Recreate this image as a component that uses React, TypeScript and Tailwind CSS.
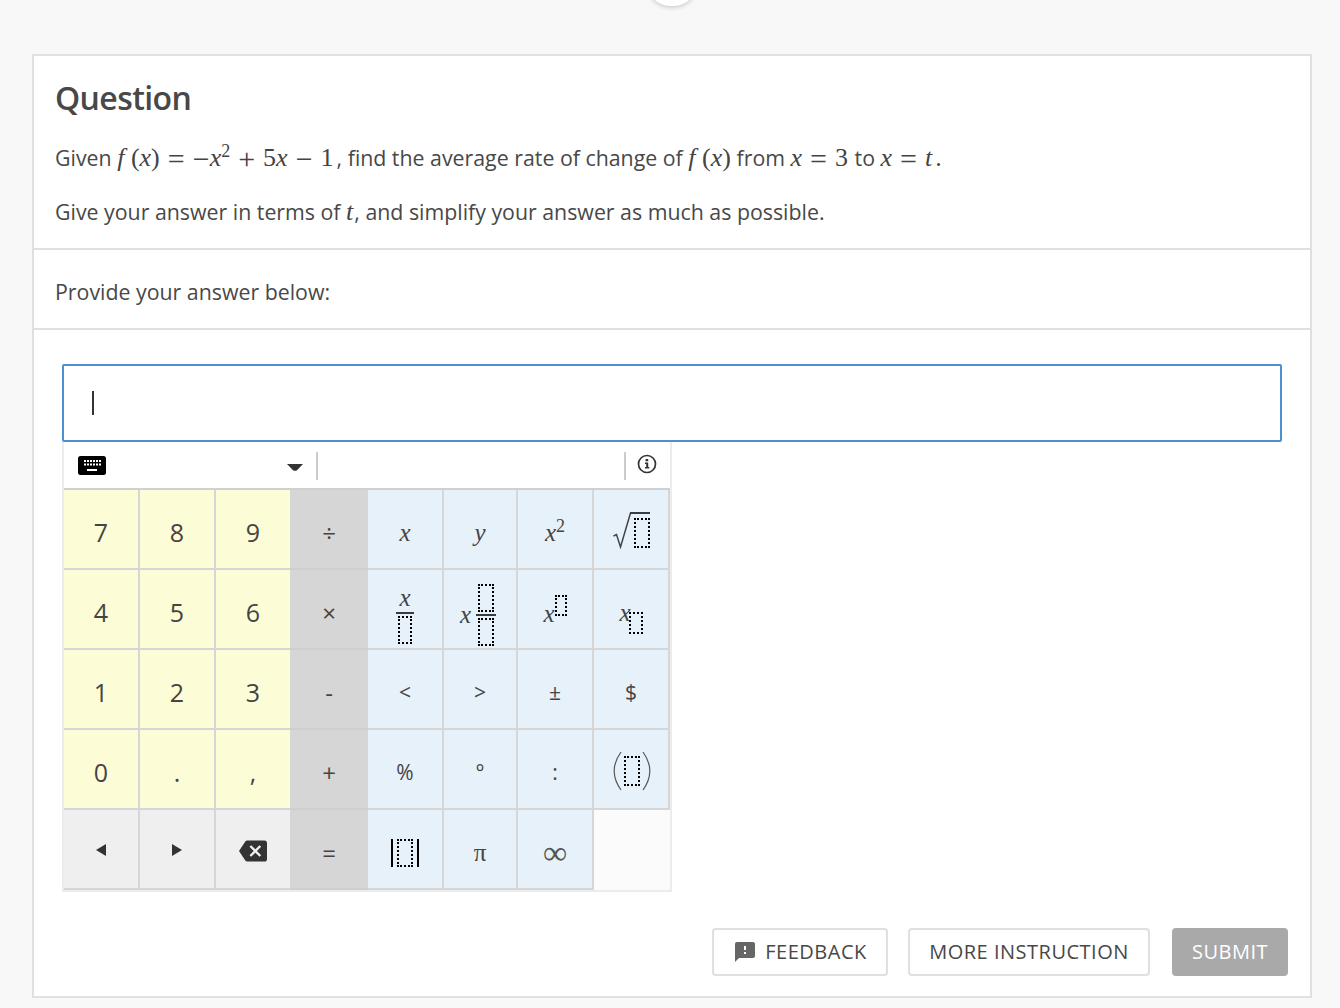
import { MdBackspace, MdFeedback } from 'react-icons/md';

const serif = "font-['Liberation_Serif',serif]";

function Hole({ className }: { className: string }) {
  return <span className={`block border-2 border-dotted border-black ${className}`} />;
}

function V({ children }: { children: React.ReactNode }) {
  return <span className={`${serif} italic`}>{children}</span>;
}

function M({ children }: { children: React.ReactNode }) {
  return <span className={`${serif} text-[26px] text-[#444]`}>{children}</span>;
}

// operators in the formula are wider than the serif font's own
function Op({ children, tight }: { children: React.ReactNode; tight?: boolean }) {
  return <span className={`align-[-3px] text-[30px] leading-none ${tight ? '' : 'mx-[8px]'}`}>{children}</span>;
}

function Key({ kind, noRight, children }: { kind: 'num' | 'op' | 'sym' | 'nav' | 'empty'; noRight?: boolean; children?: React.ReactNode }) {
  const colors = {
    num: 'bg-[#fcfcd7] text-[25px] border-b-2 border-[#d6d6d6]',
    op: 'bg-[#d6d6d6] text-[24px] border-b-2 border-[#cfcfcf]',
    sym: 'bg-[#e6f1fa] text-[21px] border-b-2 border-r-2 border-[#d6d6d6]',
    nav: 'bg-[#efefef] text-[22px] border-b-2 border-[#d6d6d6]',
    empty: 'bg-[#fbfbfb]',
  };
  const right = !noRight && (kind === 'num' || kind === 'nav') ? 'border-r-2' : '';
  return (
    <div className={`flex h-[80px] items-center justify-center pt-[7px] text-[#444] ${colors[kind]} ${right}`}>
      {children}
    </div>
  );
}

function Triangle({ flip }: { flip?: boolean }) {
  return (
    <svg width="12" height="14" viewBox="0 0 12 14" className={`mt-[-5px] ${flip ? 'rotate-180' : ''}`}>
      <path d="M11 1v12L1 7z" fill="#333" />
    </svg>
  );
}

function Paren({ flip }: { flip?: boolean }) {
  return (
    <svg width="9" height="40" viewBox="0 0 9 40" className={flip ? 'rotate-180' : ''}>
      <path d="M8 1C3 8 1.200 13 1.200 20S3 32 8 39" fill="none" stroke="#555" strokeWidth="1.200" />
    </svg>
  );
}

export default function App() {
  return (
    <div className="relative h-[1008px] overflow-hidden bg-[#f8f8f8] px-[32px] pt-[54px] font-['Open_Sans',sans-serif] text-[#484848]">
      <div className="absolute left-[648px] top-[-38px] h-[44px] w-[48px] rounded-full bg-white shadow-[0_1px_5px_rgba(0,0,0,0.22)]" />

      <div className="h-[944px] w-[1280px] border-2 border-[#e0e0e0] bg-white">
        <div className="h-[194px] border-b-2 border-[#e0e0e0] px-[21px] pt-[19px]">
          <h1 className="text-[32px] font-semibold leading-[46px] tracking-[-0.6px]">Question</h1>
          <p className="mt-[21px] whitespace-nowrap text-[21.33px] leading-[32px]">
            Given{' '}
            <M>
              <V>f</V> (<V>x</V>)<Op>=</Op>
              <Op tight>−</Op>
              <V>x</V>
              <sup className="text-[18px]">2</sup>
              <Op>+</Op>5<V>x</V>
              <Op>−</Op>1
            </M>
            <span className="ml-[3px]">,</span> find the average rate of change of{' '}
            <M>
              <V>f</V> (<V>x</V>)
            </M>{' '}
            from{' '}
            <M>
              <V>x</V>
              <Op>=</Op>3
            </M>{' '}
            <span className="ml-[1px]">to</span>{' '}
            <M>
              <V>x</V>
              <Op>=</Op>
              <V>t</V>
              <span className="ml-[3px]">.</span>
            </M>
          </p>
          <p className="mt-[22px] whitespace-nowrap text-[21.33px] leading-[32px]">
            Give your answer in terms of <M><V>t</V></M><span className="ml-[1px]">,</span> and simplify your answer as much as possible.
          </p>
        </div>

        <div className="flex h-[80px] items-center border-b-2 border-[#e0e0e0] px-[21px] pt-[5px] text-[21.33px]">
          Provide your answer below:
        </div>

        <div className="px-[28px] pt-[34px]">
          <div className="flex h-[78px] items-center rounded-[2px] border-2 border-[#4a90d2] pl-[28px]">
            <span className="h-[24px] w-[2px] bg-[#333]" />
          </div>

          <div className="w-[610px] border-x-2 border-b-2 border-[#ececec]">
            <div className="flex h-[48px] items-center border-b-2 border-[#d0d0d0] pt-[2px]">
              <svg width="28" height="19" viewBox="0 0 28 19" className="ml-[14px] mr-[181px] mt-[-2px]">
                <rect width="28" height="19" rx="2.5" fill="#000" />
                <path d="M6 4h2v2H6zM9 4h2v2H9zM12 4h2v2h-2zM15 4h2v2h-2zM18 4h2v2h-2zM21 4h2v2h-2zM6 7.500h2v2H6zM9 7.500h2v2H9zM12 7.500h2v2h-2zM15 7.500h2v2h-2zM18 7.500h2v2h-2zM21 7.500h2v2h-2zM9 13h10v2H9z" fill="#fff" />
              </svg>
              <svg width="16" height="7" viewBox="0 0 16 7" className="mt-[3px]">
                <path d="M0 0h16L10 6.300q-2 1-4 0z" fill="#333" />
              </svg>
              <span className="ml-[13px] h-[28px] w-[2px] bg-[#ccc]" />
              <span className="ml-[306px] h-[28px] w-[2px] bg-[#ccc]" />
              <svg width="20" height="20" viewBox="0 0 20 20" className="ml-[11px] mt-[-5px]">
                <circle cx="10" cy="10" r="8.5" fill="none" stroke="#333" strokeWidth="1.7" />
                <path d="M8.600 5h2.600v2.200H8.600zM8 8.500h3.200v4.600h1.100v1.400H8v-1.400h1.200V9.900H8z" fill="#333" />
              </svg>
            </div>

            <div className="grid grid-cols-[76px_76px_74px_78px_76px_74px_76px_76px]">
              <Key kind="num">7</Key>
              <Key kind="num">8</Key>
              <Key kind="num" noRight>9</Key>
              <Key kind="op">÷</Key>
              <Key kind="sym"><span className="text-[25px]"><V>x</V></span></Key>
              <Key kind="sym"><span className="text-[25px]"><V>y</V></span></Key>
              <Key kind="sym">
                <span className={`${serif} text-[25px]`}>
                  <V>x</V>
                  <sup className="text-[18px]">2</sup>
                </span>
              </Key>
              <Key kind="sym">
                <span className="mt-[-4px] flex items-start">
                  <svg width="18" height="37" viewBox="0 0 18 37" className="mr-[-1px]">
                    <path d="M0.500 24l3-1.500L7.500 35 17.500 1" fill="none" stroke="#444" strokeWidth="1.500" />
                  </svg>
                  <span className="flex w-[20px] justify-end border-t-2 border-[#3c3c3c] pt-[4px]">
                    <Hole className="h-[30px] w-[16px]" />
                  </span>
                </span>
              </Key>

              <Key kind="num">4</Key>
              <Key kind="num">5</Key>
              <Key kind="num" noRight>6</Key>
              <Key kind="op">×</Key>
              <Key kind="sym">
                <span className="mt-[4px] flex flex-col items-center">
                  <span className={`${serif} text-[25px] italic leading-[24px]`}>x</span>
                  <span className="mt-[2px] h-[2px] w-[18px] bg-[#3c3c3c]" />
                  <Hole className="mt-[2px] h-[28px] w-[14px]" />
                </span>
              </Key>
              <Key kind="sym">
                <span className="mr-[4px] mt-[4px] flex items-center">
                  <span className={`${serif} mr-[5px] text-[25px] italic`}>x</span>
                  <span className="flex flex-col items-center">
                    <Hole className="h-[28px] w-[16px]" />
                    <span className="my-[2px] h-[2px] w-[20px] bg-[#3c3c3c]" />
                    <Hole className="h-[28px] w-[16px]" />
                  </span>
                </span>
              </Key>
              <Key kind="sym">
                <span className="mt-[-3px] flex items-start">
                  <span className={`${serif} mt-[6px] text-[25px] italic leading-[26px]`}>x</span>
                  <Hole className="h-[21px] w-[12px]" />
                </span>
              </Key>
              <Key kind="sym">
                <span className="mt-[8px] flex items-start">
                  <span className={`${serif} mr-[-2px] text-[25px] italic leading-[26px]`}>x</span>
                  <Hole className="mt-[12px] h-[22px] w-[14px]" />
                </span>
              </Key>

              <Key kind="num">1</Key>
              <Key kind="num">2</Key>
              <Key kind="num" noRight>3</Key>
              <Key kind="op">-</Key>
              <Key kind="sym">&lt;</Key>
              <Key kind="sym">&gt;</Key>
              <Key kind="sym">±</Key>
              <Key kind="sym">$</Key>

              <Key kind="num">0</Key>
              <Key kind="num">.</Key>
              <Key kind="num" noRight>,</Key>
              <Key kind="op">+</Key>
              <Key kind="sym">%</Key>
              <Key kind="sym">°</Key>
              <Key kind="sym">:</Key>
              <Key kind="sym">
                <span className="ml-[2px] mt-[-3px] flex items-center gap-[2px]">
                  <Paren />
                  <Hole className="h-[30px] w-[16px]" />
                  <Paren flip />
                </span>
              </Key>

              <Key kind="nav"><Triangle /></Key>
              <Key kind="nav"><Triangle flip /></Key>
              <Key kind="nav" noRight><MdBackspace className="mt-[-3px] text-[28px] text-[#333]" /></Key>
              <Key kind="op">=</Key>
              <Key kind="sym">
                <span className="flex items-center gap-[4px]">
                  <span className="h-[28px] w-[2px] bg-black" />
                  <Hole className="h-[28px] w-[16px]" />
                  <span className="h-[28px] w-[2px] bg-black" />
                </span>
              </Key>
              <Key kind="sym"><span className={`${serif} text-[25px]`}>π</span></Key>
              <Key kind="sym"><span className={`${serif} text-[34px] leading-none text-[#555]`}>∞</span></Key>
              <Key kind="empty" />
            </div>
          </div>

          <div className="mr-[-6px] mt-[36px] flex justify-end gap-[20px] text-[20px] tracking-[0.5px]">
            <button className="flex h-[48px] w-[176px] items-center justify-center rounded-[4px] border-2 border-[#e0e0e0]">
              <MdFeedback className="mr-[8px] text-[24px] text-[#666]" />
              FEEDBACK
            </button>
            <button className="h-[48px] w-[242px] rounded-[4px] border-2 border-[#e0e0e0]">MORE INSTRUCTION</button>
            <button className="ml-[2px] h-[48px] w-[116px] rounded-[4px] bg-[#a9a9a9] text-white">SUBMIT</button>
          </div>
        </div>
      </div>
    </div>
  );
}
